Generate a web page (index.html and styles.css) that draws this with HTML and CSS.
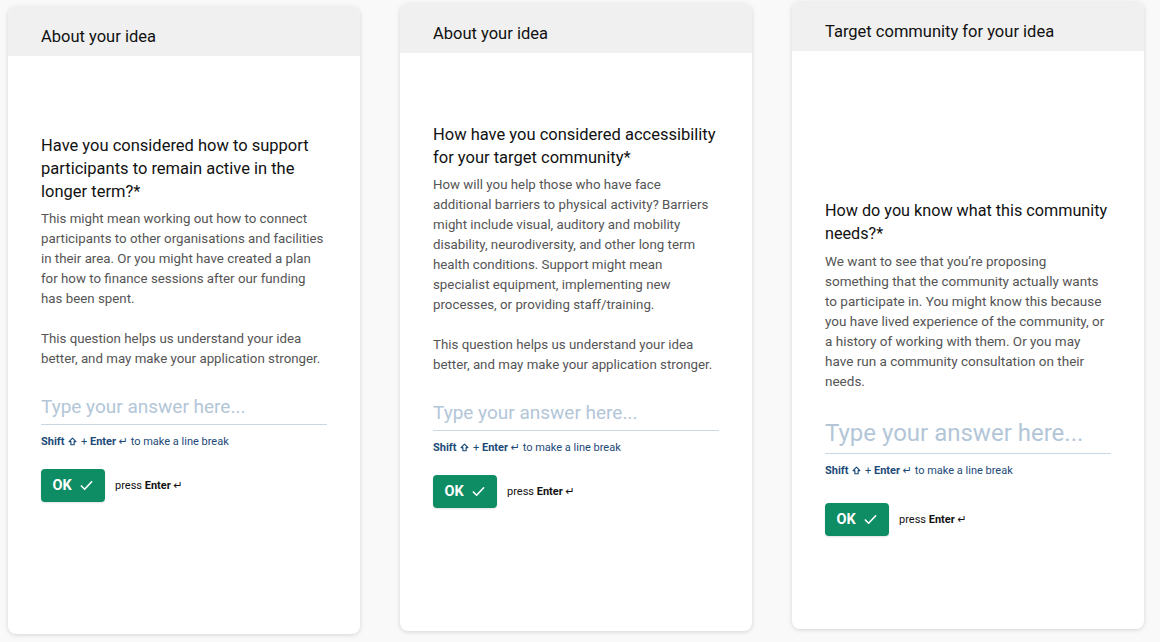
FILE: index.html
```html
<!DOCTYPE html>
<html lang="en">
<head>
<meta charset="utf-8">
<title>Application questions</title>
<link rel="stylesheet" href="styles.css">
</head>
<body>
<main class="board">
  <section class="card card--one">
    <header class="card-head">About your idea</header>
    <div class="card-body body--one">
      <h2 class="question">Have you considered how to support participants to remain active in the longer term?*</h2>
      <p class="desc">This might mean working out how to connect participants to other organisations and facilities in their area. Or you might have created a plan for how to finance sessions after our funding has been spent.</p>
      <p class="desc desc--gap">This question helps us understand your idea better, and may make your application stronger.</p>
      <div class="answer">Type your answer here...</div>
      <p class="hint"><b>Shift</b> <svg class="shift" viewBox="0 0 10 10" width="9" height="9"><path d="M5 1.2L8.8 5.2H6.8V8.6H3.2V5.2H1.2Z" fill="none" stroke="currentColor" stroke-width="1.3" stroke-linejoin="round"/></svg> + <b>Enter</b> <span class="sym">↵</span> to make a line break</p>
      <div class="actions">
        <button class="ok">OK <svg class="check" viewBox="0 0 16 16" width="15" height="15"><path d="M2.5 8.5l3.5 3.5 7.5-8" fill="none" stroke="#fff" stroke-width="1.7" stroke-linecap="round" stroke-linejoin="round"/></svg></button>
        <span class="press">press <b>Enter</b> <span class="sym">↵</span></span>
      </div>
    </div>
  </section>
  <section class="card card--two">
    <header class="card-head">About your idea</header>
    <div class="card-body body--two">
      <h2 class="question">How have you considered accessibility for your target community*</h2>
      <p class="desc">How will you help those who have face additional barriers to physical activity? Barriers might include visual, auditory and mobility disability, neurodiversity, and other long term health conditions. Support might mean specialist equipment, implementing new processes, or providing staff/training.</p>
      <p class="desc desc--gap">This question helps us understand your idea better, and may make your application stronger.</p>
      <div class="answer">Type your answer here...</div>
      <p class="hint"><b>Shift</b> <svg class="shift" viewBox="0 0 10 10" width="9" height="9"><path d="M5 1.2L8.8 5.2H6.8V8.6H3.2V5.2H1.2Z" fill="none" stroke="currentColor" stroke-width="1.3" stroke-linejoin="round"/></svg> + <b>Enter</b> <span class="sym">↵</span> to make a line break</p>
      <div class="actions">
        <button class="ok">OK <svg class="check" viewBox="0 0 16 16" width="15" height="15"><path d="M2.5 8.5l3.5 3.5 7.5-8" fill="none" stroke="#fff" stroke-width="1.7" stroke-linecap="round" stroke-linejoin="round"/></svg></button>
        <span class="press">press <b>Enter</b> <span class="sym">↵</span></span>
      </div>
    </div>
  </section>
  <section class="card card--three">
    <header class="card-head">Target community for your idea</header>
    <div class="card-body body--three">
      <h2 class="question">How do you know what this community needs?*</h2>
      <p class="desc">We want to see that you’re proposing something that the community actually wants to participate in. You might know this because you have lived experience of the community, or a history of working with them. Or you may have run a community consultation on their needs.</p>
      <div class="answer answer--large">Type your answer here...</div>
      <p class="hint"><b>Shift</b> <svg class="shift" viewBox="0 0 10 10" width="9" height="9"><path d="M5 1.2L8.8 5.2H6.8V8.6H3.2V5.2H1.2Z" fill="none" stroke="currentColor" stroke-width="1.3" stroke-linejoin="round"/></svg> + <b>Enter</b> <span class="sym">↵</span> to make a line break</p>
      <div class="actions actions--far">
        <button class="ok">OK <svg class="check" viewBox="0 0 16 16" width="15" height="15"><path d="M2.5 8.5l3.5 3.5 7.5-8" fill="none" stroke="#fff" stroke-width="1.7" stroke-linecap="round" stroke-linejoin="round"/></svg></button>
        <span class="press">press <b>Enter</b> <span class="sym">↵</span></span>
      </div>
    </div>
  </section>
</main>
</body>
</html>
```
FILE: styles.css
```css
* { box-sizing: border-box; }
html, body { margin: 0; padding: 0; }
body {
  background: #f9f9f9;
  font-family: Roboto, "Noto Sans", "Liberation Sans", sans-serif;
  color: #111;
  width: 1160px;
  height: 642px;
  overflow: hidden;
}
.board {
  display: flex;
  align-items: flex-start;
  gap: 40px;
  padding-left: 8px;
}
.card {
  width: 352px;
  height: 627px;
  background: #fff;
  border-radius: 8px;
  box-shadow: 0 1px 4px rgba(0,0,0,0.12), 0 0 10px rgba(0,0,0,0.03);
  overflow: hidden;
  display: flex;
  flex-direction: column;
}
.card--one { margin-top: 7px; }
.card--two { margin-top: 4px; }
.card--three { margin-top: 2px; }
.card-head {
  height: 49px;
  background: #f0f0f0;
  padding: 20px 33px 0;
  font-size: 16.5px;
  line-height: 20px;
  color: #111;
}
.card-body {
  padding: 0 33px;
}
.body--one { padding-top: 78px; }
.body--two { padding-top: 70px; }
.body--three { padding-top: 148px; }
.question {
  margin: 0 0 6px;
  font-size: 16.5px;
  line-height: 23px;
  font-weight: 400;
  color: #111;
}
.body--three .question { font-size: 16.2px; }
.desc {
  margin: 0;
  font-size: 13.3px;
  line-height: 20px;
  color: #555;
}
.body--three .desc { font-size: 13.5px; }
.desc--gap { margin-top: 20px; }
.answer {
  margin-top: 24px;
  font-size: 19px;
  line-height: 28px;
  padding-bottom: 3px;
  color: #b3c6d8;
  border-bottom: 1px solid #c8d7e4;
}
.answer--large {
  margin-top: 26px;
  font-size: 24px;
  line-height: 32px;
  padding-bottom: 4px;
}
.hint {
  margin: 9px 0 0;
  font-size: 11px;
  line-height: 16px;
  color: #1c4a78;
}
.hint b { font-weight: 700; }
.shift { vertical-align: -1px; margin: 0 1px; }
.sym { font-family: "DejaVu Sans", sans-serif; font-size: 11px; }
.actions {
  margin-top: 19px;
  display: flex;
  align-items: center;
  gap: 10px;
}
.actions--far { margin-top: 24px; }
.ok {
  width: 64px;
  height: 33px;
  border: 0;
  border-radius: 4px;
  background: #0e8c64;
  color: #fff;
  font-family: inherit;
  font-size: 14.5px;
  font-weight: 700;
  display: flex;
  align-items: center;
  justify-content: center;
  gap: 7px;
  padding: 0;
  box-shadow: 0 1px 2px rgba(0,0,0,0.12);
}
.press {
  font-size: 11px;
  color: #111;
}
.press b { font-weight: 700; }
```
